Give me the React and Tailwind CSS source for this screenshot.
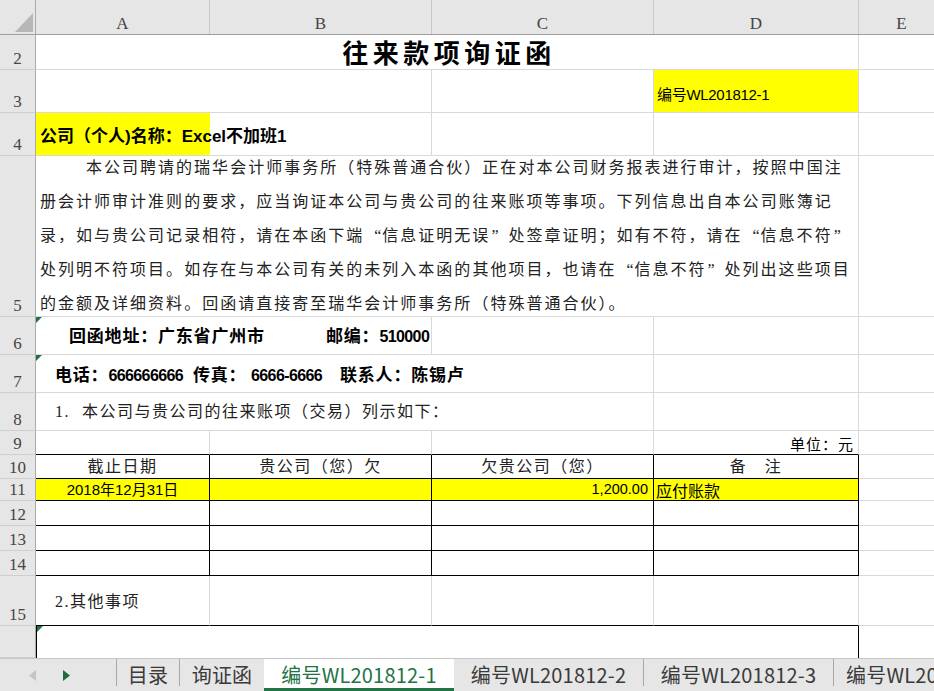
import React from 'react';

const SERIF = "font-[family-name:'Liberation_Serif','Noto_Sans_CJK_SC',serif]";
const SANS = "font-[family-name:'Liberation_Sans','Noto_Sans_CJK_SC',sans-serif]";
const UI = "font-[family-name:'Noto_Sans_CJK_SC',sans-serif]";

function Row({ n, h, children }) {
    return (
        <div className={`flex shrink-0 ${h}`}>
            <div className={`w-[36px] shrink-0 bg-[#e6e6e6] border-r border-b border-r-[#ababab] border-b-[#cfcfcf] flex items-end justify-center pb-[2px] text-[17px] leading-none text-[#444] ${SERIF}`}>
                {n}
            </div>
            {children}
        </div>
    );
}

function Cell({ w, className = 'border-r border-b border-[#d9d9d9]', children }) {
    return <div className={`shrink-0 relative ${w} ${className}`}>{children}</div>;
}

function Flag() {
    return <span className="absolute left-0 top-0 w-0 h-0 border-t-[6px] border-r-[6px] border-t-[#217346] border-r-transparent" />;
}

function ColHead({ w, label }) {
    return (
        <div className={`shrink-0 ${w} border-r border-[#c8c8c8] flex items-end justify-center pb-[2px] text-[17px] leading-none text-[#444] ${SERIF}`}>
            {label}
        </div>
    );
}

// digits in the bold lines are narrower than the CJK text
function Num({ children }) {
    return <span className="text-[16px] tracking-[-0.6px]">{children}</span>;
}

// full-width curly quotes, like the SimSun ones in the sheet
function Line({ text }) {
    return Array.from(text).map((ch, i) => {
        if (ch === '“') {
            return <span key={i} className="inline-block w-[18px] text-right tracking-normal pr-[1px]">{ch}</span>;
        }
        if (ch === '”') {
            return <span key={i} className="inline-block w-[18px] text-left tracking-normal pl-[1px]">{ch}</span>;
        }
        return ch;
    });
}

const paragraph = [
    '本公司聘请的瑞华会计师事务所（特殊普通合伙）正在对本公司财务报表进行审计，按照中国注',
    '册会计师审计准则的要求，应当询证本公司与贵公司的往来账项等事项。下列信息出自本公司账簿记',
    '录，如与贵公司记录相符，请在本函下端“信息证明无误”处签章证明；如有不符，请在“信息不符”',
    '处列明不符项目。如存在与本公司有关的未列入本函的其他项目，也请在“信息不符”处列出这些项目',
    '的金额及详细资料。回函请直接寄至瑞华会计师事务所（特殊普通合伙）。',
];

const tableRows = ['12', '13', '14'];

function Tab({ w, label, active }) {
    if (active) {
        return (
            <div className={`shrink-0 ${w} bg-white border-b-[3px] border-[#217346] flex items-center justify-center pt-[2px] text-[20px] tracking-[0.2px] text-[#217346] ${UI}`}>
                {label}
            </div>
        );
    }
    return (
        <div className={`shrink-0 ${w} flex items-center justify-center text-[20px] tracking-[0.2px] text-[#3a3a3a] ${UI}`}>
            {label}
        </div>
    );
}

function Sep() {
    return <div className="shrink-0 w-px h-[27px] bg-[#a8a8a8] self-start" />;
}

export default function App() {
    return (
        <div className="w-[934px] h-[691px] overflow-hidden bg-white flex flex-col text-black">
            <div className="h-[658px] overflow-hidden flex flex-col">
                {/* column headers */}
                <div className="flex h-[35px] shrink-0 bg-[#e6e6e6] border-b border-[#9e9e9e]">
                    <div className="w-[36px] shrink-0 border-r border-[#ababab] flex items-end justify-end pr-[2px] pb-[2px]">
                        <svg width="18" height="19" viewBox="0 0 18 19">
                            <polygon points="0,19 18,19 18,0" fill="#b7b7b7" />
                        </svg>
                    </div>
                    <ColHead w="w-[174px]" label="A" />
                    <ColHead w="w-[222px]" label="B" />
                    <ColHead w="w-[222px]" label="C" />
                    <ColHead w="w-[205px]" label="D" />
                    <ColHead w="w-[86px]" label="E" />
                </div>

                {/* row 2 title */}
                <Row n="2" h="h-[35px]">
                    <Cell w="w-[823px]" className="border-r border-b border-[#d9d9d9] flex items-center justify-center pl-[4px]">
                        <span className={`text-[26px] font-bold tracking-[4.5px] leading-none ${UI}`}>往来款项询证函</span>
                    </Cell>
                    <Cell w="w-[86px]" />
                </Row>

                {/* row 3 */}
                <Row n="3" h="h-[43px]">
                    <Cell w="w-[396px]" />
                    <Cell w="w-[222px]" />
                    <Cell w="w-[205px]" className="border-r border-b border-[#d9d9d9] bg-[#ffff00] flex items-end pl-[3px] pb-[10px]">
                        <span className={`text-[15px] leading-none tracking-[-0.3px] ${SANS}`}>编号WL201812-1</span>
                    </Cell>
                    <Cell w="w-[86px]" />
                </Row>

                {/* row 4 */}
                <Row n="4" h="h-[43px]">
                    <Cell w="w-[174px]" className="border-b border-[#d9d9d9] bg-[#ffff00] flex items-center pl-[4px] pt-[4px]">
                        <span className={`text-[17px] font-bold whitespace-nowrap leading-none ${SANS}`}>公司（个人)名称：Excel不加班1</span>
                    </Cell>
                    <Cell w="w-[222px]" />
                    <Cell w="w-[222px]" />
                    <Cell w="w-[205px]" />
                    <Cell w="w-[86px]" />
                </Row>

                {/* row 5 paragraph */}
                <Row n="5" h="h-[161px]">
                    <Cell w="w-[823px]" className="border-r border-b border-[#d9d9d9] flex flex-col justify-center">
                        <div className={`text-[16px] leading-[34px] tracking-[2px] text-[#222] pl-[4px] ${SERIF}`}>
                            {paragraph.map((line, i) => (
                                <div key={i} className={i === 0 ? 'whitespace-nowrap pl-[46px]' : 'whitespace-nowrap'}>
                                    <Line text={line} />
                                </div>
                            ))}
                        </div>
                    </Cell>
                    <Cell w="w-[86px]" />
                </Row>

                {/* row 6 */}
                <Row n="6" h="h-[38px]">
                    <Cell w="w-[396px]" className={`border-r border-b border-[#d9d9d9] flex items-center pl-[33px] pt-[2px] text-[17px] font-bold tracking-[0.8px] whitespace-nowrap ${SANS}`}>
                        <Flag />
                        <span className="w-[257px] shrink-0">回函地址：广东省广州市</span>
                        <span>邮编：<Num>510000</Num></span>
                    </Cell>
                    <Cell w="w-[222px]" />
                    <Cell w="w-[205px]" />
                    <Cell w="w-[86px]" />
                </Row>

                {/* row 7 */}
                <Row n="7" h="h-[38px]">
                    <Cell w="w-[618px]" className={`border-r border-b border-[#d9d9d9] flex items-center pl-[19px] pt-[4px] text-[17px] font-bold tracking-[0.8px] whitespace-nowrap ${SANS}`}>
                        <Flag />
                        <span className="w-[138px] shrink-0">电话：<Num>666666666</Num></span>
                        <span className="w-[58px] shrink-0">传真：</span>
                        <span className="w-[89px] shrink-0"><Num>6666-6666</Num></span>
                        <span>联系人：陈锡卢</span>
                    </Cell>
                    <Cell w="w-[205px]" />
                    <Cell w="w-[86px]" />
                </Row>

                {/* row 8 */}
                <Row n="8" h="h-[38px]">
                    <Cell w="w-[618px]" className={`border-r border-b border-[#d9d9d9] flex items-center pl-[19px] text-[16px] tracking-[1.5px] text-[#222] whitespace-nowrap ${SERIF}`}>
                        <span className="w-[27px] shrink-0">1.</span>
                        <span>本公司与贵公司的往来账项（交易）列示如下：</span>
                    </Cell>
                    <Cell w="w-[205px]" />
                    <Cell w="w-[86px]" />
                </Row>

                {/* row 9 */}
                <Row n="9" h="h-[24px]">
                    <Cell w="w-[174px]" className="border-r border-r-[#d9d9d9] border-b border-b-black" />
                    <Cell w="w-[222px]" className="border-r border-r-[#d9d9d9] border-b border-b-black" />
                    <Cell w="w-[222px]" className="border-r border-r-[#d9d9d9] border-b border-b-black" />
                    <Cell w="w-[205px]" className={`border-r border-r-[#d9d9d9] border-b border-b-black flex items-end justify-end pr-[4px] text-[15px] leading-[20px] tracking-[1px] ${UI}`}>
                        单位：元
                    </Cell>
                    <Cell w="w-[86px]" />
                </Row>

                {/* row 10 table header */}
                <Row n="10" h="h-[24px]">
                    <Cell w="w-[174px]" className={`border-r border-b border-black flex items-center justify-center text-[16px] tracking-[1.5px] text-[#222] ${SERIF}`}>截止日期</Cell>
                    <Cell w="w-[222px]" className={`border-r border-b border-black flex items-center justify-center text-[16px] tracking-[1.5px] text-[#222] ${SERIF}`}>贵公司（您）欠</Cell>
                    <Cell w="w-[222px]" className={`border-r border-b border-black flex items-center justify-center text-[16px] tracking-[1.5px] text-[#222] ${SERIF}`}>欠贵公司（您）</Cell>
                    <Cell w="w-[205px]" className={`border-r border-b border-black flex items-center justify-center text-[16px] tracking-[1.5px] text-[#222] ${SERIF}`}>备　注</Cell>
                    <Cell w="w-[86px]" />
                </Row>

                {/* row 11 data */}
                <Row n="11" h="h-[22px]">
                    <Cell w="w-[174px]" className={`border-r border-b border-black bg-[#ffff00] flex items-center justify-center text-[15px] leading-none ${SANS}`}>2018年12月31日</Cell>
                    <Cell w="w-[222px]" className="border-r border-b border-black bg-[#ffff00]" />
                    <Cell w="w-[222px]" className={`border-r border-b border-black bg-[#ffff00] flex items-center justify-end pr-[5px] text-[14.5px] leading-none ${SANS}`}>1,200.00</Cell>
                    <Cell w="w-[205px]" className={`border-r border-b border-black bg-[#ffff00] flex items-center pl-[2px] text-[16px] leading-none ${UI}`}>应付账款</Cell>
                    <Cell w="w-[86px]" />
                </Row>

                {tableRows.map((n) => (
                    <Row key={n} n={n} h="h-[25px]">
                        <Cell w="w-[174px]" className="border-r border-b border-black" />
                        <Cell w="w-[222px]" className="border-r border-b border-black" />
                        <Cell w="w-[222px]" className="border-r border-b border-black" />
                        <Cell w="w-[205px]" className="border-r border-b border-black" />
                        <Cell w="w-[86px]" />
                    </Row>
                ))}

                {/* row 15 */}
                <Row n="15" h="h-[50px]">
                    <Cell w="w-[174px]" className={`border-r border-r-[#d9d9d9] border-b border-b-black flex items-center pl-[19px] pt-[2px] text-[16px] tracking-[1.5px] text-[#222] whitespace-nowrap ${SERIF}`}>
                        2.其他事项
                    </Cell>
                    <Cell w="w-[222px]" className="border-r border-r-[#d9d9d9] border-b border-b-black" />
                    <Cell w="w-[222px]" className="border-r border-r-[#d9d9d9] border-b border-b-black" />
                    <Cell w="w-[205px]" className="border-r border-r-[#d9d9d9] border-b border-b-black" />
                    <Cell w="w-[86px]" />
                </Row>

                {/* row 16, only its top shows */}
                <Row n="" h="h-[32px]">
                    <Cell w="w-[823px]" className="border-l border-r border-black">
                        <Flag />
                    </Cell>
                    <Cell w="w-[86px]" className="border-r border-[#d9d9d9]" />
                </Row>
            </div>

            {/* sheet tabs */}
            <div className="h-[33px] shrink-0 bg-[#e6e6e6] border-t border-[#c6c6c6] flex items-stretch">
                <div className="w-[116px] shrink-0 flex items-center">
                    <svg width="7" height="11" viewBox="0 0 7 11" className="ml-[29px]">
                        <polygon points="7,0 7,11 0,5.5" fill="#c4c4c4" />
                    </svg>
                    <svg width="7" height="11" viewBox="0 0 7 11" className="ml-[27px]">
                        <polygon points="0,0 0,11 7,5.5" fill="#1e6b3c" />
                    </svg>
                </div>
                <Sep />
                <Tab w="w-[62px]" label="目录" />
                <Sep />
                <Tab w="w-[84px]" label="询证函" />
                <Tab w="w-[190px]" label="编号WL201812-1" active />
                <Tab w="w-[189px]" label="编号WL201812-2" />
                <Sep />
                <Tab w="w-[189px]" label="编号WL201812-3" />
                <Sep />
                <div className={`shrink-0 pl-[12px] flex items-center text-[20px] tracking-[0.2px] text-[#3a3a3a] whitespace-nowrap ${UI}`}>编号WL201812-4</div>
            </div>
        </div>
    );
}
